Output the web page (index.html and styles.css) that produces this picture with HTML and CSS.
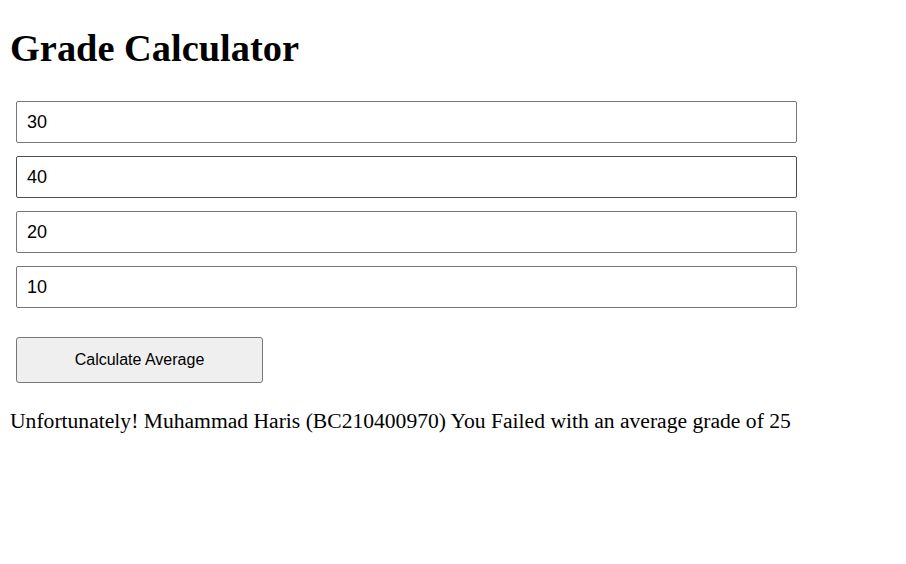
FILE: index.html
```html
<!DOCTYPE html>
<html lang="en">
<head>
<meta charset="utf-8">
<title>Grade Calculator</title>
<link rel="stylesheet" href="styles.css">
</head>
<body>
<h1 class="title">Grade Calculator</h1>
<form class="grade-form">
  <input class="grade-input" type="text" value="30">
  <input class="grade-input grade-input--hover" type="text" value="40">
  <input class="grade-input" type="text" value="20">
  <input class="grade-input" type="text" value="10">
  <button class="calc-btn" type="button">Calculate Average</button>
</form>
<p class="result">Unfortunately! Muhammad Haris (BC210400970) You Failed with an average grade of 25</p>
</body>
</html>
```
FILE: styles.css
```css
html, body {
  margin: 0;
  padding: 0;
  background: #ffffff;
}
body {
  padding: 8px;
  font-family: "Liberation Serif", "Times New Roman", serif;
  color: #000;
}
.title {
  font-family: "Liberation Serif", "Times New Roman", serif;
  font-size: 38.4px;
  font-weight: bold;
  line-height: 44px;
  margin: 18px 0 0 2px;
}
.grade-form {
  display: flex;
  flex-direction: column;
  align-items: flex-start;
  gap: 13px;
  margin-top: 31px;
  padding-left: 8px;
}
.grade-input {
  box-sizing: border-box;
  width: 781px;
  height: 42px;
  margin: 0;
  padding: 0 10px;
  border: 1px solid #767676;
  border-radius: 2px;
  font-family: "Liberation Sans", Arial, sans-serif;
  font-size: 18px;
  color: #000;
  background: #fff;
  outline: none;
}
.grade-input--hover {
  border-color: #4f4f4f;
}
.calc-btn {
  box-sizing: border-box;
  width: 247px;
  height: 46px;
  margin-top: 16px;
  padding: 0;
  border: 1px solid #767676;
  border-radius: 3px;
  background: #efefef;
  font-family: "Liberation Sans", Arial, sans-serif;
  font-size: 16px;
  color: #000;
}
.result {
  font-size: 21.6px;
  line-height: 24px;
  margin: 26px 0 0 2px;
}
```
